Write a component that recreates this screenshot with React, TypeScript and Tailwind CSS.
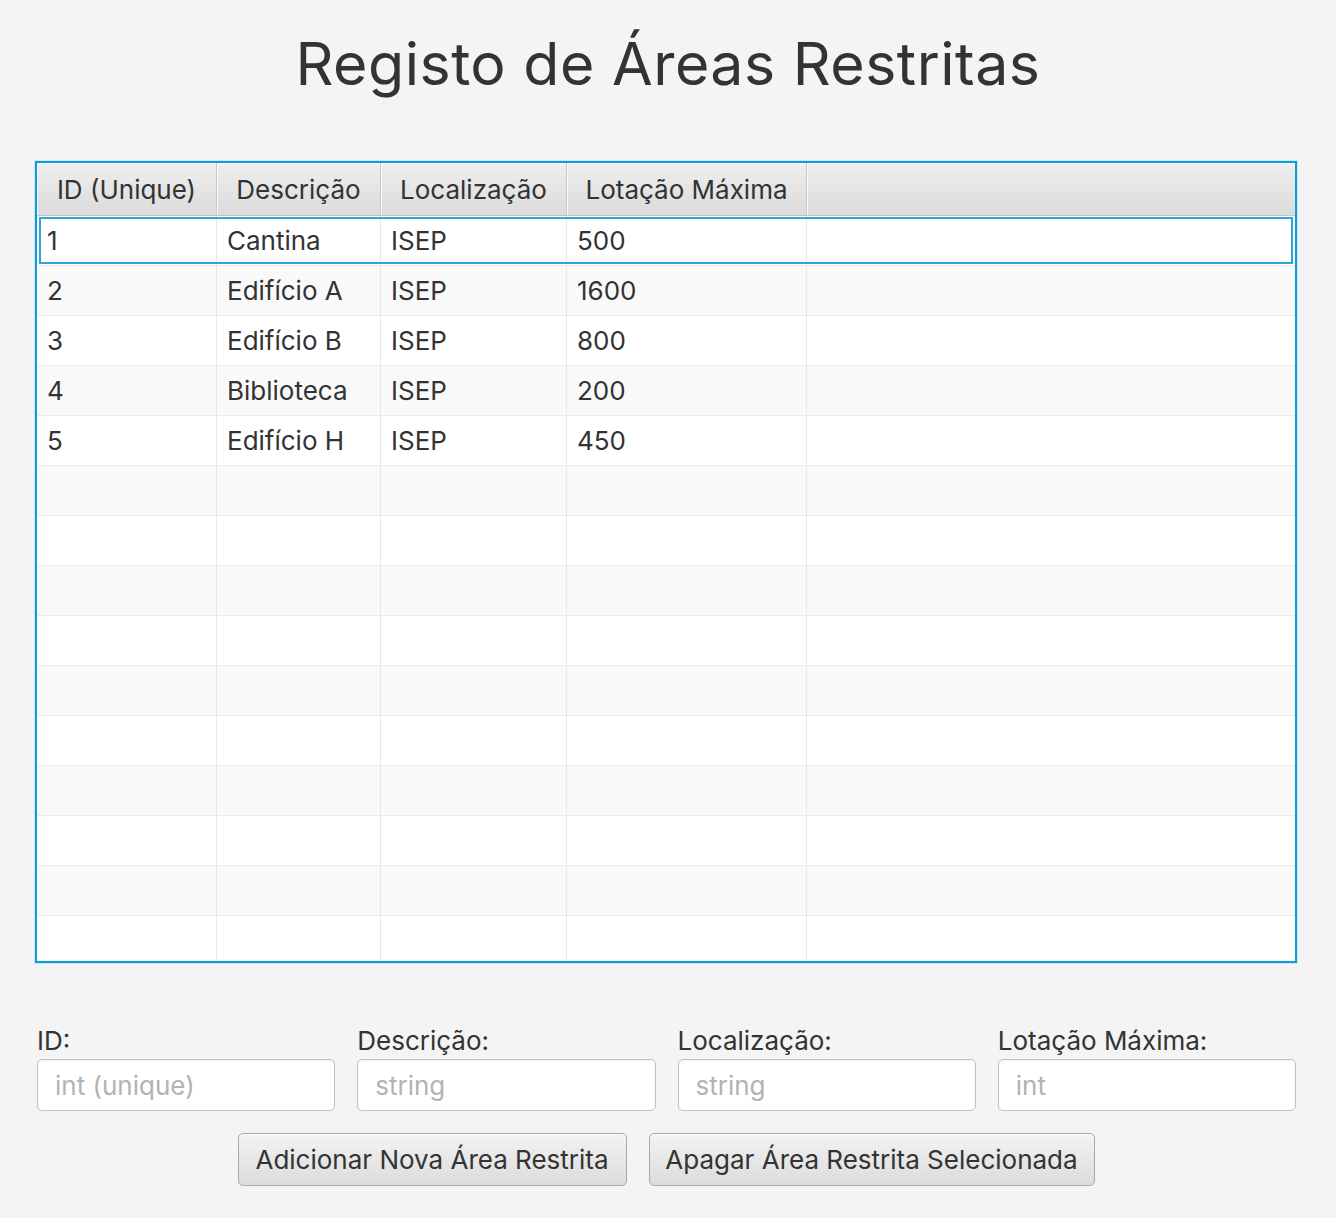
import React from 'react'

const font = { fontFamily: 'Inter, "Noto Sans", sans-serif' }

const columns = [
  { title: 'ID (Unique)', width: 'w-[180px]' },
  { title: 'Descrição', width: 'w-[164px]' },
  { title: 'Localização', width: 'w-[186px]' },
  { title: 'Lotação Máxima', width: 'w-[240px]' },
]

const rows = [
  ['1', 'Cantina', 'ISEP', '500'],
  ['2', 'Edifício A', 'ISEP', '1600'],
  ['3', 'Edifício B', 'ISEP', '800'],
  ['4', 'Biblioteca', 'ISEP', '200'],
  ['5', 'Edifício H', 'ISEP', '450'],
]

const fields = [
  { label: 'ID:', placeholder: 'int (unique)' },
  { label: 'Descrição:', placeholder: 'string' },
  { label: 'Localização:', placeholder: 'string' },
  { label: 'Lotação Máxima:', placeholder: 'int' },
]

function HeaderCell({ title, width }: { title: string; width: string }) {
  return (
    <div
      className={`${width} shrink-0 h-full flex items-center justify-center border-r border-[#c9c9c9] bg-gradient-to-b from-[#efefef] to-[#dbdbdb] shadow-[inset_1px_1px_0_#fafafa]`}
    >
      {title}
    </div>
  )
}

function Row({ cells, index }: { cells?: string[]; index: number }) {
  const selected = index === 0
  const bg = index % 2 === 0 ? 'bg-white' : 'bg-[#f9f9f9]'
  return (
    <div className={`relative flex h-[50px] shrink-0 border-b border-[#ebebeb] ${bg}`}>
      {columns.map((c, i) => (
        <div
          key={i}
          className={`${c.width} shrink-0 h-full flex items-center pl-[10px] border-r border-[#e8e8e8]`}
        >
          {cells ? cells[i] : ''}
        </div>
      ))}
      <div className="flex-1" />
      {selected && (
        <div className="absolute left-[2px] right-[2px] top-[1px] bottom-[1px] border-2 border-[#2ea7d6] pointer-events-none" />
      )}
    </div>
  )
}

export default function App() {
  const emptyRows = Array.from({ length: 10 }, (_, i) => i + 5)

  return (
    <div
      className="w-[1336px] h-[1218px] bg-[#f4f4f4] text-[#333333] flex flex-col"
      style={font}
    >
      <h1 className="text-center text-[59px] leading-none mt-[34px] tracking-[0.5px] text-[#333333]">
        Registo de Áreas Restritas
      </h1>

      <div className="ml-[35px] mt-[68px] w-[1262px] h-[802px] border-2 border-[#0a9fd6] shadow-[0_0_0_1px_#cfe6ef] bg-white overflow-hidden flex flex-col text-[26px]">
        <div className="flex h-[53px] shrink-0 border-b border-[#c4c4c4] text-[#333333]">
          {columns.map((c) => (
            <HeaderCell key={c.title} title={c.title} width={c.width} />
          ))}
          <div className="flex-1 h-full bg-gradient-to-b from-[#efefef] to-[#dbdbdb] shadow-[inset_1px_1px_0_#fafafa]" />
        </div>
        {rows.map((r, i) => (
          <Row key={i} cells={r} index={i} />
        ))}
        {emptyRows.map((i) => (
          <Row key={i} index={i} />
        ))}
      </div>

      <div className="ml-[37px] mt-[62px] w-[1259px] grid grid-cols-4 gap-x-[22px] text-[26px]">
        {fields.map((f) => (
          <div key={f.label} className="flex flex-col">
            <label className="leading-[32px] text-[#333333]">{f.label}</label>
            <input
              placeholder={f.placeholder}
              className="mt-[2px] h-[52px] w-full rounded-[5px] border border-[#c2c2c2] bg-white px-[17px] text-[26px] outline-none placeholder:text-[#b3b3b3] shadow-[inset_0_1px_2px_rgba(0,0,0,0.06)]"
            />
          </div>
        ))}
      </div>

      <div className="mt-[22px] flex justify-center gap-[22px] pr-[4px] text-[26px]">
        <button className="h-[53px] w-[389px] rounded-[5px] border border-[#a9a9a9] bg-gradient-to-b from-[#f3f3f3] to-[#dcdcdc] shadow-[inset_0_1px_0_#ffffff] text-[#333333]">
          Adicionar Nova Área Restrita
        </button>
        <button className="h-[53px] w-[446px] rounded-[5px] border border-[#a9a9a9] bg-gradient-to-b from-[#f3f3f3] to-[#dcdcdc] shadow-[inset_0_1px_0_#ffffff] text-[#333333]">
          Apagar Área Restrita Selecionada
        </button>
      </div>
    </div>
  )
}
